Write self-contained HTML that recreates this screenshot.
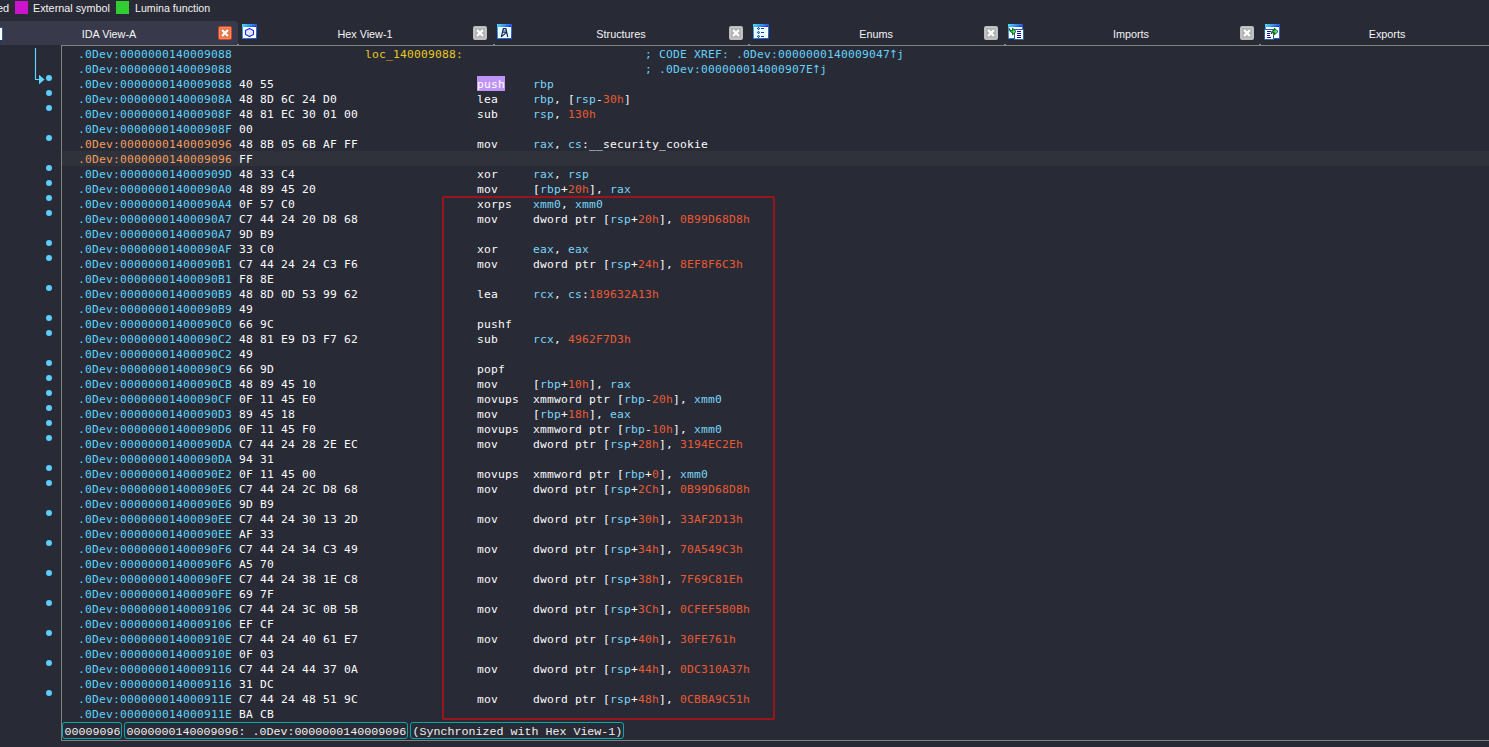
<!DOCTYPE html>
<html lang="en">
<head>
<meta charset="utf-8">
<title>IDA View-A</title>
<style>
html,body{margin:0;padding:0;}
body{width:1489px;height:747px;overflow:hidden;background:#282a36;position:relative;
  font-family:"Liberation Sans",sans-serif;color:#f0f0f0;}
.abs{position:absolute;}
/* legend */
.lg{position:absolute;top:0px;height:16px;line-height:16px;font-size:11.5px;color:#f4f4f4;white-space:pre;transform-origin:0 0;}
.sq{position:absolute;top:1px;width:13px;height:13px;}
/* tabs */
.tabact{position:absolute;left:-20px;top:21px;width:258px;height:24px;background:#383a4b;border-radius:4px 4px 0 0;}
.tabtxt{position:absolute;top:26px;height:16px;line-height:16px;font-size:11.5px;color:#f4f4f4;white-space:pre;transform:translateX(-50%) scaleX(0.94);}
.cls{position:absolute;top:26px;width:14px;height:14px;border-radius:2px;background:#bcbcbc;}
.cls:before{content:"";position:absolute;left:1px;top:1px;width:10px;height:10px;border:1px solid #c6c6c6;background:#b3b3b3;border-radius:1px;}
.cls.on{background:#e03c22;}
.cls.on:before{border-color:#e98f6b;background:#e07a4b;}
.cls svg{position:absolute;left:0;top:0;}
.ico{position:absolute;top:24px;width:16px;height:15px;}
/* frame */
.frame{position:absolute;left:61px;top:45px;width:1500px;height:694px;border:1px solid #818181;box-sizing:content-box;border-right:none;}
.topline{position:absolute;left:61px;top:45px;width:1428px;height:1px;background:#9a9a9a;}
/* code rows */
.row{position:absolute;left:78px;width:1411px;height:15px;}
.curbg{position:absolute;left:62px;top:151px;width:1427px;height:15px;background:#2f313b;}
.t{position:absolute;top:1px;height:15px;line-height:15px;font-family:"DejaVu Sans Mono","Liberation Mono",monospace;font-size:11.3px;white-space:pre;letter-spacing:0.197px;}
.t i{font-style:normal;}
.t i.up{font-family:"DejaVu Sans",sans-serif;letter-spacing:-2.47px;position:relative;left:-1.25px;}
.a{color:#5cd4fb;}
.ao{color:#f29d5c;}
.w,.p{color:#fbfbfb;}
.l{color:#e8c81e;}
.r{color:#7ad6f8;}
.c{color:#66d2f8;}
.n{color:#e85a32;}
.hlbg{position:absolute;top:0;height:15px;background:#c094f7;}
.hlm{color:#ffffff;}
.dot{position:absolute;left:45.7px;width:6.6px;height:6.6px;margin-top:-0.3px;border-radius:50%;background:#5ccefe;}
.redbox{position:absolute;left:442px;top:196px;width:329px;height:520px;border:2px solid #9a141e;border-radius:1.5px;}
/* status */
.sb{position:absolute;top:722px;height:17px;box-sizing:border-box;border:1px solid #08a8a8;border-radius:3px;
  font-family:"Liberation Mono",monospace;font-size:11.67px;line-height:18px;color:#f0f0f0;white-space:pre;padding-left:1.5px;}
</style>
</head>
<body>
<!-- legend -->
<div class="lg" style="left:-3.5px;transform:scaleX(0.95)">ed</div>
<div class="sq" style="left:15px;background:#cc14cc"></div>
<div class="lg" style="left:33px;transform:scaleX(0.94)">External symbol</div>
<div class="sq" style="left:116px;background:#32cd32"></div>
<div class="lg" style="left:134.5px;transform:scaleX(0.925)">Lumina function</div>

<!-- tabs -->
<div class="tabact"></div>
<div class="topline"></div>
<div class="tabtxt" style="left:109px">IDA View-A</div>
<div class="cls on" style="left:218px"><svg width="14" height="14" viewBox="0 0 14 14"><path d="M4.1 4.1 L9.9 9.9 M9.9 4.1 L4.1 9.9" stroke="#fff" stroke-width="2.1"/></svg></div>

<div class="tabtxt" style="left:364.5px">Hex View-1</div>
<div class="cls" style="left:473px"><svg width="14" height="14" viewBox="0 0 14 14"><path d="M4.1 4.1 L9.9 9.9 M9.9 4.1 L4.1 9.9" stroke="#fff" stroke-width="2.1"/></svg></div>
<div class="tabtxt" style="left:620.5px">Structures</div>
<div class="cls" style="left:729px"><svg width="14" height="14" viewBox="0 0 14 14"><path d="M4.1 4.1 L9.9 9.9 M9.9 4.1 L4.1 9.9" stroke="#fff" stroke-width="2.1"/></svg></div>
<div class="tabtxt" style="left:875.5px">Enums</div>
<div class="cls" style="left:984px"><svg width="14" height="14" viewBox="0 0 14 14"><path d="M4.1 4.1 L9.9 9.9 M9.9 4.1 L4.1 9.9" stroke="#fff" stroke-width="2.1"/></svg></div>
<div class="tabtxt" style="left:1131px">Imports</div>
<div class="cls" style="left:1240px"><svg width="14" height="14" viewBox="0 0 14 14"><path d="M4.1 4.1 L9.9 9.9 M9.9 4.1 L4.1 9.9" stroke="#fff" stroke-width="2.1"/></svg></div>
<div class="tabtxt" style="left:1387px">Exports</div>

<svg class="abs" style="left:0;top:0" width="0" height="0"><defs>
<linearGradient id="tb" x1="0" y1="0" x2="1" y2="0.25"><stop offset="0" stop-color="#4be4ff"/><stop offset="0.45" stop-color="#3aa4f4"/><stop offset="1" stop-color="#2a55dd"/></linearGradient>
<linearGradient id="wf" x1="0" y1="0" x2="1" y2="1"><stop offset="0" stop-color="#43b4f7"/><stop offset="1" stop-color="#1f4fcc"/></linearGradient>
<linearGradient id="ga" x1="0" y1="0" x2="1" y2="0"><stop offset="0" stop-color="#0b7a1a"/><stop offset="0.5" stop-color="#35e03a"/><stop offset="1" stop-color="#8fd0ff"/></linearGradient>
<linearGradient id="tl" x1="0" y1="0" x2="1" y2="0"><stop offset="0" stop-color="#3fc4fb"/><stop offset="0.5" stop-color="#2f78ec"/><stop offset="1" stop-color="#2226c2"/></linearGradient>
</defs></svg>
<!-- partial icon of first tab -->
<div class="abs" style="left:-12px;top:27px;width:13px;height:12px;background:#fff;border:1px solid #2c5c9e;border-bottom-color:#0c3a78;"></div>
<!-- Hex View icon -->
<svg class="abs" style="left:242px;top:24px" width="16" height="16" viewBox="0 0 16 16">
 <rect x="0" y="0" width="15" height="15" fill="url(#wf)"/>
 <rect x="0" y="0" width="15" height="3" fill="url(#tb)"/>
 <rect x="2" y="2" width="12" height="1" fill="url(#tl)"/>
 <rect x="1" y="3" width="13" height="11" fill="#ffffff"/>
 <path d="M7.5 4.4 L11.5 6.6 V10.4 L7.5 12.6 L3.5 10.4 V6.6 Z" fill="#dfe9fb" stroke="#2424ff" stroke-width="1.1"/>
</svg>
<!-- Structures icon -->
<svg class="abs" style="left:497px;top:24px" width="16" height="16" viewBox="0 0 16 16">
 <rect x="0" y="0" width="15" height="15" fill="url(#wf)"/>
 <rect x="0" y="0" width="15" height="3" fill="url(#tb)"/>
 <rect x="2" y="2" width="12" height="1" fill="url(#tl)"/>
 <rect x="1" y="3" width="13" height="11" fill="#ffffff"/>
 <rect x="2" y="4" width="11" height="9" fill="#e6fbff"/>
 <path d="M6.3 4.6 H8.9 L10.7 12.6 M6.3 4.6 L4.4 12.6 M6.3 6 H8.9 M5.8 8.1 H9.6 M9.3 8.6 L4.8 12.4" fill="none" stroke="#0c2c5c" stroke-width="1.15" stroke-linecap="round"/>
 <rect x="7" y="5" width="1.2" height="0.8" fill="#ffffff"/>
</svg>
<!-- Enums icon -->
<svg class="abs" style="left:753px;top:24px" width="17" height="16" viewBox="0 0 17 16">
 <rect x="0" y="0" width="16" height="15" fill="url(#wf)"/>
 <rect x="0" y="0" width="16" height="3" fill="url(#tb)"/>
 <rect x="2" y="2" width="13" height="1" fill="url(#tl)"/>
 <rect x="1" y="3" width="14" height="11" fill="#ffffff"/>
 <rect x="2" y="4" width="12" height="9" fill="#e8fcff"/>
 <g fill="#0a1f8c">
  <path d="M5.5 3 L7 4.5 L5.5 6 L4 4.5 Z"/><path d="M5.5 7 L7 8.5 L5.5 10 L4 8.5 Z"/><path d="M5.5 11 L7 12.5 L5.5 14 L4 12.5 Z"/>
 </g>
 <g fill="#18e0ff"><rect x="5" y="4" width="1" height="1"/><rect x="5" y="8" width="1" height="1"/><rect x="5" y="12" width="1" height="1"/></g>
 <g fill="#1438c8"><rect x="8" y="4" width="3" height="1"/><rect x="8" y="8" width="3" height="1"/><rect x="8" y="12" width="3" height="1"/></g>
</svg>
<!-- Imports icon -->
<svg class="abs" style="left:1008px;top:24px" width="17" height="17" viewBox="0 0 17 17">
 <rect x="0" y="0" width="15" height="15" fill="url(#wf)"/>
 <rect x="0" y="0" width="15" height="3" fill="url(#tb)"/>
 <rect x="2" y="2" width="12" height="1" fill="url(#tl)"/>
 <rect x="1" y="3" width="13" height="11" fill="#ffffff"/>
 <rect x="6.5" y="5.5" width="9" height="10" fill="#ffffff" stroke="#2f6398" stroke-width="1"/>
 <g fill="#10109c"><rect x="9" y="7" width="4" height="1"/><rect x="9" y="9" width="4" height="1"/><rect x="9" y="11" width="4" height="1"/><rect x="9" y="13" width="4" height="1"/></g>
 <path d="M1.2 4.6 C2 6.2 3 6.8 4.6 6.6 V4.2 L8 7.5 L4.6 10.8 V8.6 C3 8.8 1.6 7.4 1.2 4.6 Z" fill="url(#ga)" stroke="#054a0e" stroke-width="0.9"/>
</svg>
<!-- Exports icon -->
<svg class="abs" style="left:1264px;top:24px" width="17" height="17" viewBox="0 0 17 17">
 <rect x="1" y="0" width="15" height="15" fill="url(#wf)"/>
 <rect x="1" y="0" width="15" height="3" fill="url(#tb)"/>
 <rect x="3" y="2" width="12" height="1" fill="url(#tl)"/>
 <rect x="2" y="3" width="13" height="11" fill="#ffffff"/>
 <rect x="0.5" y="5.5" width="9" height="10" fill="#ffffff" stroke="#2f6398" stroke-width="1"/>
 <g fill="#10109c"><rect x="3" y="7" width="4" height="1"/><rect x="3" y="9" width="3" height="1"/><rect x="3" y="11" width="3" height="1"/><rect x="3" y="13" width="4" height="1"/></g>
 <path d="M7.2 10 C7.2 7.4 8.4 6.4 10.4 6.4 V4.2 L14 7.5 L10.4 10.8 V8.6 C9 8.5 8 8.8 7.2 10 Z" fill="url(#ga)" stroke="#054a0e" stroke-width="0.9"/>
</svg>
<!-- tab separators notches -->
<div class="abs" style="left:237px;top:44px;width:2px;height:1px;background:#8a8a8a"></div>
<div class="abs" style="left:493px;top:44px;width:2px;height:1px;background:#8a8a8a"></div>
<div class="abs" style="left:748px;top:44px;width:2px;height:1px;background:#8a8a8a"></div>
<div class="abs" style="left:1004px;top:44px;width:2px;height:1px;background:#8a8a8a"></div>
<div class="abs" style="left:1259px;top:44px;width:2px;height:1px;background:#8a8a8a"></div>


<!-- code frame -->
<div class="frame"></div>

<!-- arrow gutter -->
<svg class="abs" style="left:30px;top:47px" width="20" height="40" viewBox="0 0 20 40">
  <path d="M5.5 1 V32.5 H10" fill="none" stroke="#60d8fd" stroke-width="1.15"/>
  <path d="M9 27.8 L14.6 32.5 L9 37.2 Z" fill="#60d8fd"/>
</svg>
<div class="dot" style="top:75px"></div>
<div class="dot" style="top:90px"></div>
<div class="dot" style="top:105px"></div>
<div class="dot" style="top:135px"></div>
<div class="dot" style="top:165px"></div>
<div class="dot" style="top:180px"></div>
<div class="dot" style="top:195px"></div>
<div class="dot" style="top:210px"></div>
<div class="dot" style="top:240px"></div>
<div class="dot" style="top:255px"></div>
<div class="dot" style="top:285px"></div>
<div class="dot" style="top:315px"></div>
<div class="dot" style="top:330px"></div>
<div class="dot" style="top:360px"></div>
<div class="dot" style="top:375px"></div>
<div class="dot" style="top:390px"></div>
<div class="dot" style="top:405px"></div>
<div class="dot" style="top:420px"></div>
<div class="dot" style="top:435px"></div>
<div class="dot" style="top:465px"></div>
<div class="dot" style="top:480px"></div>
<div class="dot" style="top:510px"></div>
<div class="dot" style="top:540px"></div>
<div class="dot" style="top:570px"></div>
<div class="dot" style="top:600px"></div>
<div class="dot" style="top:630px"></div>
<div class="dot" style="top:660px"></div>
<div class="dot" style="top:690px"></div>

<!-- rows -->
<div class="curbg"></div>
<div class="row" style="top:46px"><span class="t a" style="left:0px">.0Dev:0000000140009088</span><span class="t l" style="left:287px">loc_140009088:</span><span class="t c" style="left:567px">; CODE XREF: .0Dev:0000000140009047<i class="up">↑</i>j</span></div>
<div class="row" style="top:61px"><span class="t a" style="left:0px">.0Dev:0000000140009088</span><span class="t c" style="left:567px">; .0Dev:000000014000907E<i class="up">↑</i>j</span></div>
<div class="row" style="top:76px"><span class="t a" style="left:0px">.0Dev:0000000140009088</span><span class="t w" style="left:161px">40 55</span><span class="hlbg" style="left:399px;width:28px"></span><span class="t w hlm" style="left:399px">push</span><span class="t" style="left:455px"><i class="r">rbp</i></span></div>
<div class="row" style="top:91px"><span class="t a" style="left:0px">.0Dev:000000014000908A</span><span class="t w" style="left:161px">48 8D 6C 24 D0</span><span class="t w" style="left:399px">lea</span><span class="t" style="left:455px"><i class="r">rbp</i><i class="p">, </i><i class="p">[</i><i class="r">rsp</i><i class="p">-</i><i class="n">30h</i><i class="p">]</i></span></div>
<div class="row" style="top:106px"><span class="t a" style="left:0px">.0Dev:000000014000908F</span><span class="t w" style="left:161px">48 81 EC 30 01 00</span><span class="t w" style="left:399px">sub</span><span class="t" style="left:455px"><i class="r">rsp</i><i class="p">, </i><i class="n">130h</i></span></div>
<div class="row" style="top:121px"><span class="t a" style="left:0px">.0Dev:000000014000908F</span><span class="t w" style="left:161px">00</span></div>
<div class="row" style="top:136px"><span class="t ao" style="left:0px">.0Dev:0000000140009096</span><span class="t w" style="left:161px">48 8B 05 6B AF FF</span><span class="t w" style="left:399px">mov</span><span class="t" style="left:455px"><i class="r">rax</i><i class="p">, </i><i class="r">cs</i><i class="p">:</i><i class="w">__security_cookie</i></span></div>
<div class="row" style="top:151px"><span class="t ao" style="left:0px">.0Dev:0000000140009096</span><span class="t w" style="left:161px">FF</span></div>
<div class="row" style="top:166px"><span class="t a" style="left:0px">.0Dev:000000014000909D</span><span class="t w" style="left:161px">48 33 C4</span><span class="t w" style="left:399px">xor</span><span class="t" style="left:455px"><i class="r">rax</i><i class="p">, </i><i class="r">rsp</i></span></div>
<div class="row" style="top:181px"><span class="t a" style="left:0px">.0Dev:00000001400090A0</span><span class="t w" style="left:161px">48 89 45 20</span><span class="t w" style="left:399px">mov</span><span class="t" style="left:455px"><i class="p">[</i><i class="r">rbp</i><i class="p">+</i><i class="n">20h</i><i class="p">]</i><i class="p">, </i><i class="r">rax</i></span></div>
<div class="row" style="top:196px"><span class="t a" style="left:0px">.0Dev:00000001400090A4</span><span class="t w" style="left:161px">0F 57 C0</span><span class="t w" style="left:399px">xorps</span><span class="t" style="left:455px"><i class="r">xmm0</i><i class="p">, </i><i class="r">xmm0</i></span></div>
<div class="row" style="top:211px"><span class="t a" style="left:0px">.0Dev:00000001400090A7</span><span class="t w" style="left:161px">C7 44 24 20 D8 68</span><span class="t w" style="left:399px">mov</span><span class="t" style="left:455px"><i class="w">dword ptr </i><i class="p">[</i><i class="r">rsp</i><i class="p">+</i><i class="n">20h</i><i class="p">]</i><i class="p">, </i><i class="n">0B99D68D8h</i></span></div>
<div class="row" style="top:226px"><span class="t a" style="left:0px">.0Dev:00000001400090A7</span><span class="t w" style="left:161px">9D B9</span></div>
<div class="row" style="top:241px"><span class="t a" style="left:0px">.0Dev:00000001400090AF</span><span class="t w" style="left:161px">33 C0</span><span class="t w" style="left:399px">xor</span><span class="t" style="left:455px"><i class="r">eax</i><i class="p">, </i><i class="r">eax</i></span></div>
<div class="row" style="top:256px"><span class="t a" style="left:0px">.0Dev:00000001400090B1</span><span class="t w" style="left:161px">C7 44 24 24 C3 F6</span><span class="t w" style="left:399px">mov</span><span class="t" style="left:455px"><i class="w">dword ptr </i><i class="p">[</i><i class="r">rsp</i><i class="p">+</i><i class="n">24h</i><i class="p">]</i><i class="p">, </i><i class="n">8EF8F6C3h</i></span></div>
<div class="row" style="top:271px"><span class="t a" style="left:0px">.0Dev:00000001400090B1</span><span class="t w" style="left:161px">F8 8E</span></div>
<div class="row" style="top:286px"><span class="t a" style="left:0px">.0Dev:00000001400090B9</span><span class="t w" style="left:161px">48 8D 0D 53 99 62</span><span class="t w" style="left:399px">lea</span><span class="t" style="left:455px"><i class="r">rcx</i><i class="p">, </i><i class="r">cs</i><i class="p">:</i><i class="n">189632A13h</i></span></div>
<div class="row" style="top:301px"><span class="t a" style="left:0px">.0Dev:00000001400090B9</span><span class="t w" style="left:161px">49</span></div>
<div class="row" style="top:316px"><span class="t a" style="left:0px">.0Dev:00000001400090C0</span><span class="t w" style="left:161px">66 9C</span><span class="t w" style="left:399px">pushf</span></div>
<div class="row" style="top:331px"><span class="t a" style="left:0px">.0Dev:00000001400090C2</span><span class="t w" style="left:161px">48 81 E9 D3 F7 62</span><span class="t w" style="left:399px">sub</span><span class="t" style="left:455px"><i class="r">rcx</i><i class="p">, </i><i class="n">4962F7D3h</i></span></div>
<div class="row" style="top:346px"><span class="t a" style="left:0px">.0Dev:00000001400090C2</span><span class="t w" style="left:161px">49</span></div>
<div class="row" style="top:361px"><span class="t a" style="left:0px">.0Dev:00000001400090C9</span><span class="t w" style="left:161px">66 9D</span><span class="t w" style="left:399px">popf</span></div>
<div class="row" style="top:376px"><span class="t a" style="left:0px">.0Dev:00000001400090CB</span><span class="t w" style="left:161px">48 89 45 10</span><span class="t w" style="left:399px">mov</span><span class="t" style="left:455px"><i class="p">[</i><i class="r">rbp</i><i class="p">+</i><i class="n">10h</i><i class="p">]</i><i class="p">, </i><i class="r">rax</i></span></div>
<div class="row" style="top:391px"><span class="t a" style="left:0px">.0Dev:00000001400090CF</span><span class="t w" style="left:161px">0F 11 45 E0</span><span class="t w" style="left:399px">movups</span><span class="t" style="left:455px"><i class="w">xmmword ptr </i><i class="p">[</i><i class="r">rbp</i><i class="p">-</i><i class="n">20h</i><i class="p">]</i><i class="p">, </i><i class="r">xmm0</i></span></div>
<div class="row" style="top:406px"><span class="t a" style="left:0px">.0Dev:00000001400090D3</span><span class="t w" style="left:161px">89 45 18</span><span class="t w" style="left:399px">mov</span><span class="t" style="left:455px"><i class="p">[</i><i class="r">rbp</i><i class="p">+</i><i class="n">18h</i><i class="p">]</i><i class="p">, </i><i class="r">eax</i></span></div>
<div class="row" style="top:421px"><span class="t a" style="left:0px">.0Dev:00000001400090D6</span><span class="t w" style="left:161px">0F 11 45 F0</span><span class="t w" style="left:399px">movups</span><span class="t" style="left:455px"><i class="w">xmmword ptr </i><i class="p">[</i><i class="r">rbp</i><i class="p">-</i><i class="n">10h</i><i class="p">]</i><i class="p">, </i><i class="r">xmm0</i></span></div>
<div class="row" style="top:436px"><span class="t a" style="left:0px">.0Dev:00000001400090DA</span><span class="t w" style="left:161px">C7 44 24 28 2E EC</span><span class="t w" style="left:399px">mov</span><span class="t" style="left:455px"><i class="w">dword ptr </i><i class="p">[</i><i class="r">rsp</i><i class="p">+</i><i class="n">28h</i><i class="p">]</i><i class="p">, </i><i class="n">3194EC2Eh</i></span></div>
<div class="row" style="top:451px"><span class="t a" style="left:0px">.0Dev:00000001400090DA</span><span class="t w" style="left:161px">94 31</span></div>
<div class="row" style="top:466px"><span class="t a" style="left:0px">.0Dev:00000001400090E2</span><span class="t w" style="left:161px">0F 11 45 00</span><span class="t w" style="left:399px">movups</span><span class="t" style="left:455px"><i class="w">xmmword ptr </i><i class="p">[</i><i class="r">rbp</i><i class="p">+</i><i class="n">0</i><i class="p">]</i><i class="p">, </i><i class="r">xmm0</i></span></div>
<div class="row" style="top:481px"><span class="t a" style="left:0px">.0Dev:00000001400090E6</span><span class="t w" style="left:161px">C7 44 24 2C D8 68</span><span class="t w" style="left:399px">mov</span><span class="t" style="left:455px"><i class="w">dword ptr </i><i class="p">[</i><i class="r">rsp</i><i class="p">+</i><i class="n">2Ch</i><i class="p">]</i><i class="p">, </i><i class="n">0B99D68D8h</i></span></div>
<div class="row" style="top:496px"><span class="t a" style="left:0px">.0Dev:00000001400090E6</span><span class="t w" style="left:161px">9D B9</span></div>
<div class="row" style="top:511px"><span class="t a" style="left:0px">.0Dev:00000001400090EE</span><span class="t w" style="left:161px">C7 44 24 30 13 2D</span><span class="t w" style="left:399px">mov</span><span class="t" style="left:455px"><i class="w">dword ptr </i><i class="p">[</i><i class="r">rsp</i><i class="p">+</i><i class="n">30h</i><i class="p">]</i><i class="p">, </i><i class="n">33AF2D13h</i></span></div>
<div class="row" style="top:526px"><span class="t a" style="left:0px">.0Dev:00000001400090EE</span><span class="t w" style="left:161px">AF 33</span></div>
<div class="row" style="top:541px"><span class="t a" style="left:0px">.0Dev:00000001400090F6</span><span class="t w" style="left:161px">C7 44 24 34 C3 49</span><span class="t w" style="left:399px">mov</span><span class="t" style="left:455px"><i class="w">dword ptr </i><i class="p">[</i><i class="r">rsp</i><i class="p">+</i><i class="n">34h</i><i class="p">]</i><i class="p">, </i><i class="n">70A549C3h</i></span></div>
<div class="row" style="top:556px"><span class="t a" style="left:0px">.0Dev:00000001400090F6</span><span class="t w" style="left:161px">A5 70</span></div>
<div class="row" style="top:571px"><span class="t a" style="left:0px">.0Dev:00000001400090FE</span><span class="t w" style="left:161px">C7 44 24 38 1E C8</span><span class="t w" style="left:399px">mov</span><span class="t" style="left:455px"><i class="w">dword ptr </i><i class="p">[</i><i class="r">rsp</i><i class="p">+</i><i class="n">38h</i><i class="p">]</i><i class="p">, </i><i class="n">7F69C81Eh</i></span></div>
<div class="row" style="top:586px"><span class="t a" style="left:0px">.0Dev:00000001400090FE</span><span class="t w" style="left:161px">69 7F</span></div>
<div class="row" style="top:601px"><span class="t a" style="left:0px">.0Dev:0000000140009106</span><span class="t w" style="left:161px">C7 44 24 3C 0B 5B</span><span class="t w" style="left:399px">mov</span><span class="t" style="left:455px"><i class="w">dword ptr </i><i class="p">[</i><i class="r">rsp</i><i class="p">+</i><i class="n">3Ch</i><i class="p">]</i><i class="p">, </i><i class="n">0CFEF5B0Bh</i></span></div>
<div class="row" style="top:616px"><span class="t a" style="left:0px">.0Dev:0000000140009106</span><span class="t w" style="left:161px">EF CF</span></div>
<div class="row" style="top:631px"><span class="t a" style="left:0px">.0Dev:000000014000910E</span><span class="t w" style="left:161px">C7 44 24 40 61 E7</span><span class="t w" style="left:399px">mov</span><span class="t" style="left:455px"><i class="w">dword ptr </i><i class="p">[</i><i class="r">rsp</i><i class="p">+</i><i class="n">40h</i><i class="p">]</i><i class="p">, </i><i class="n">30FE761h</i></span></div>
<div class="row" style="top:646px"><span class="t a" style="left:0px">.0Dev:000000014000910E</span><span class="t w" style="left:161px">0F 03</span></div>
<div class="row" style="top:661px"><span class="t a" style="left:0px">.0Dev:0000000140009116</span><span class="t w" style="left:161px">C7 44 24 44 37 0A</span><span class="t w" style="left:399px">mov</span><span class="t" style="left:455px"><i class="w">dword ptr </i><i class="p">[</i><i class="r">rsp</i><i class="p">+</i><i class="n">44h</i><i class="p">]</i><i class="p">, </i><i class="n">0DC310A37h</i></span></div>
<div class="row" style="top:676px"><span class="t a" style="left:0px">.0Dev:0000000140009116</span><span class="t w" style="left:161px">31 DC</span></div>
<div class="row" style="top:691px"><span class="t a" style="left:0px">.0Dev:000000014000911E</span><span class="t w" style="left:161px">C7 44 24 48 51 9C</span><span class="t w" style="left:399px">mov</span><span class="t" style="left:455px"><i class="w">dword ptr </i><i class="p">[</i><i class="r">rsp</i><i class="p">+</i><i class="n">48h</i><i class="p">]</i><i class="p">, </i><i class="n">0CBBA9C51h</i></span></div>
<div class="row" style="top:706px"><span class="t a" style="left:0px">.0Dev:000000014000911E</span><span class="t w" style="left:161px">BA CB</span></div>

<div class="redbox"></div>

<!-- status -->
<div class="sb" style="left:62px;width:60px">00009096</div>
<div class="sb" style="left:124px;width:284px">0000000140009096: .0Dev:0000000140009096</div>
<div class="sb" style="left:410px;width:214px">(Synchronized with Hex View-1)</div>
</body>
</html>
